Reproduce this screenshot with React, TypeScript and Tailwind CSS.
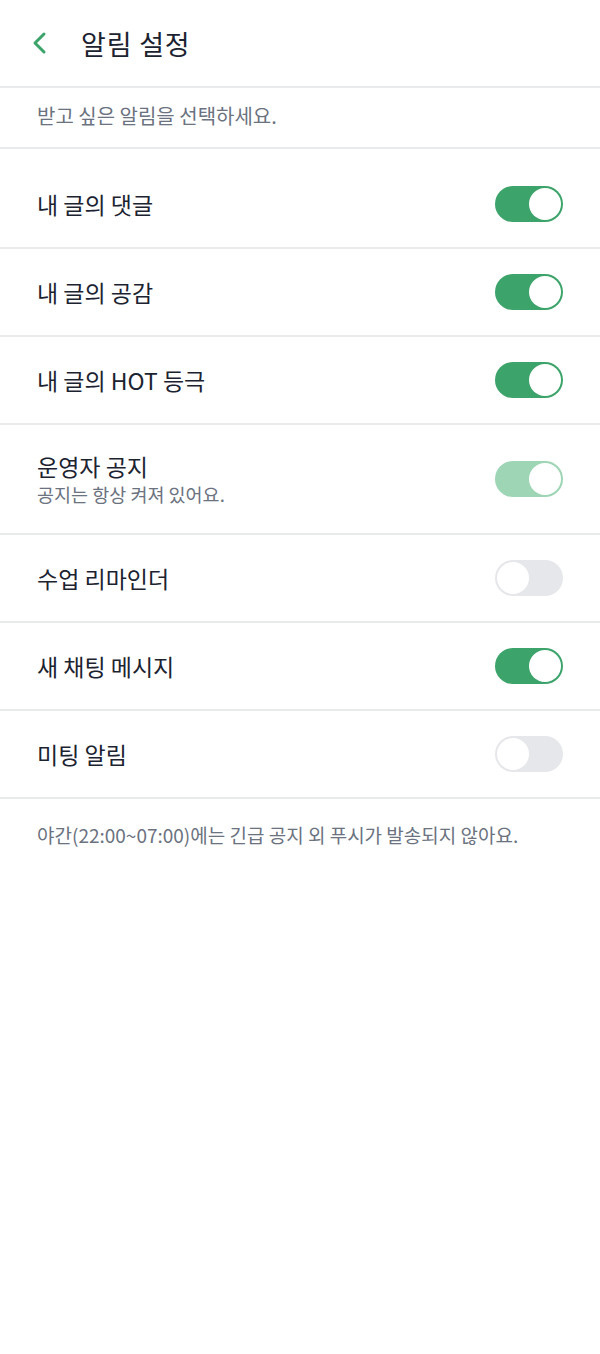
import * as React from "react";

type Item = {
  id: string;
  label: string;
  hint?: string;
  on: boolean;
  locked?: boolean;
};

const ITEMS: Item[] = [
  { id: "comment", label: "내 글의 댓글", on: true },
  { id: "like", label: "내 글의 공감", on: true },
  { id: "hot", label: "내 글의 HOT 등극", on: true },
  { id: "notice", label: "운영자 공지", hint: "공지는 항상 켜져 있어요.", on: true, locked: true },
  { id: "class", label: "수업 리마인더", on: false },
  { id: "chat", label: "새 채팅 메시지", on: true },
  { id: "meeting", label: "미팅 알림", on: false },
];

function Toggle({ on, locked, onChange }: { on: boolean; locked?: boolean; onChange: () => void }) {
  const track = locked ? "bg-[#9dd5b5]" : on ? "bg-[#3ca36b]" : "bg-[#e6e7ea]";
  return (
    <button
      type="button"
      role="switch"
      aria-checked={on}
      disabled={locked}
      onClick={onChange}
      className={`flex h-[36px] w-[68px] shrink-0 items-center rounded-full p-[2px] ${track} ${
        on ? "justify-end" : "justify-start"
      }`}
    >
      <span className="h-[32px] w-[32px] rounded-full bg-white" />
    </button>
  );
}

export default function App() {
  const [items, setItems] = React.useState(ITEMS);

  const toggle = (id: string) =>
    setItems((prev) => prev.map((it) => (it.id === id && !it.locked ? { ...it, on: !it.on } : it)));

  return (
    <div
      className="min-h-[1354px] w-[600px] bg-white text-[#1c2330]"
      style={{ fontFamily: '"Noto Sans CJK KR", "Noto Sans", sans-serif' }}
    >
      {/* Header */}
      <header className="flex h-[88px] items-center border-b-2 border-[#e9eaec] pl-[30px]">
        <svg width="20" height="24" viewBox="0 0 20 24" fill="none" className="mr-[31px]">
          <path d="M14 3 L5 12 L14 21" stroke="#3ca36b" strokeWidth="3" strokeLinecap="round" strokeLinejoin="round" />
        </svg>
        <h1 className="text-[27px] leading-none font-normal tracking-[0.8px]">알림 설정</h1>
      </header>

      <p className="flex h-[61px] items-center border-b-2 border-[#e9eaec] pb-[4px] pl-[37px] text-[20px] text-[#6b7280]">
        받고 싶은 알림을 선택하세요.
      </p>

      {/* Toggles */}
      <ul className="pt-[12px]">
        {items.map((it) => (
          <li
            key={it.id}
            className={`flex items-center justify-between border-b-2 border-[#e9eaec] pl-[37px] pr-[37px] ${
              it.hint ? "h-[110px]" : "h-[88px]"
            }`}
          >
            <div className="flex flex-col">
              <span className="text-[23px] leading-[30px]">{it.label}</span>
              {it.hint ? (
                <span className="text-[18.5px] leading-[26px] text-[#6b7280]">{it.hint}</span>
              ) : null}
            </div>
            <Toggle on={it.on} locked={it.locked} onChange={() => toggle(it.id)} />
          </li>
        ))}
      </ul>

      <p className="pl-[37px] pt-[22px] text-[19px] text-[#6b7280]">
        야간(22:00~07:00)에는 긴급 공지 외 푸시가 발송되지 않아요.
      </p>
    </div>
  );
}
